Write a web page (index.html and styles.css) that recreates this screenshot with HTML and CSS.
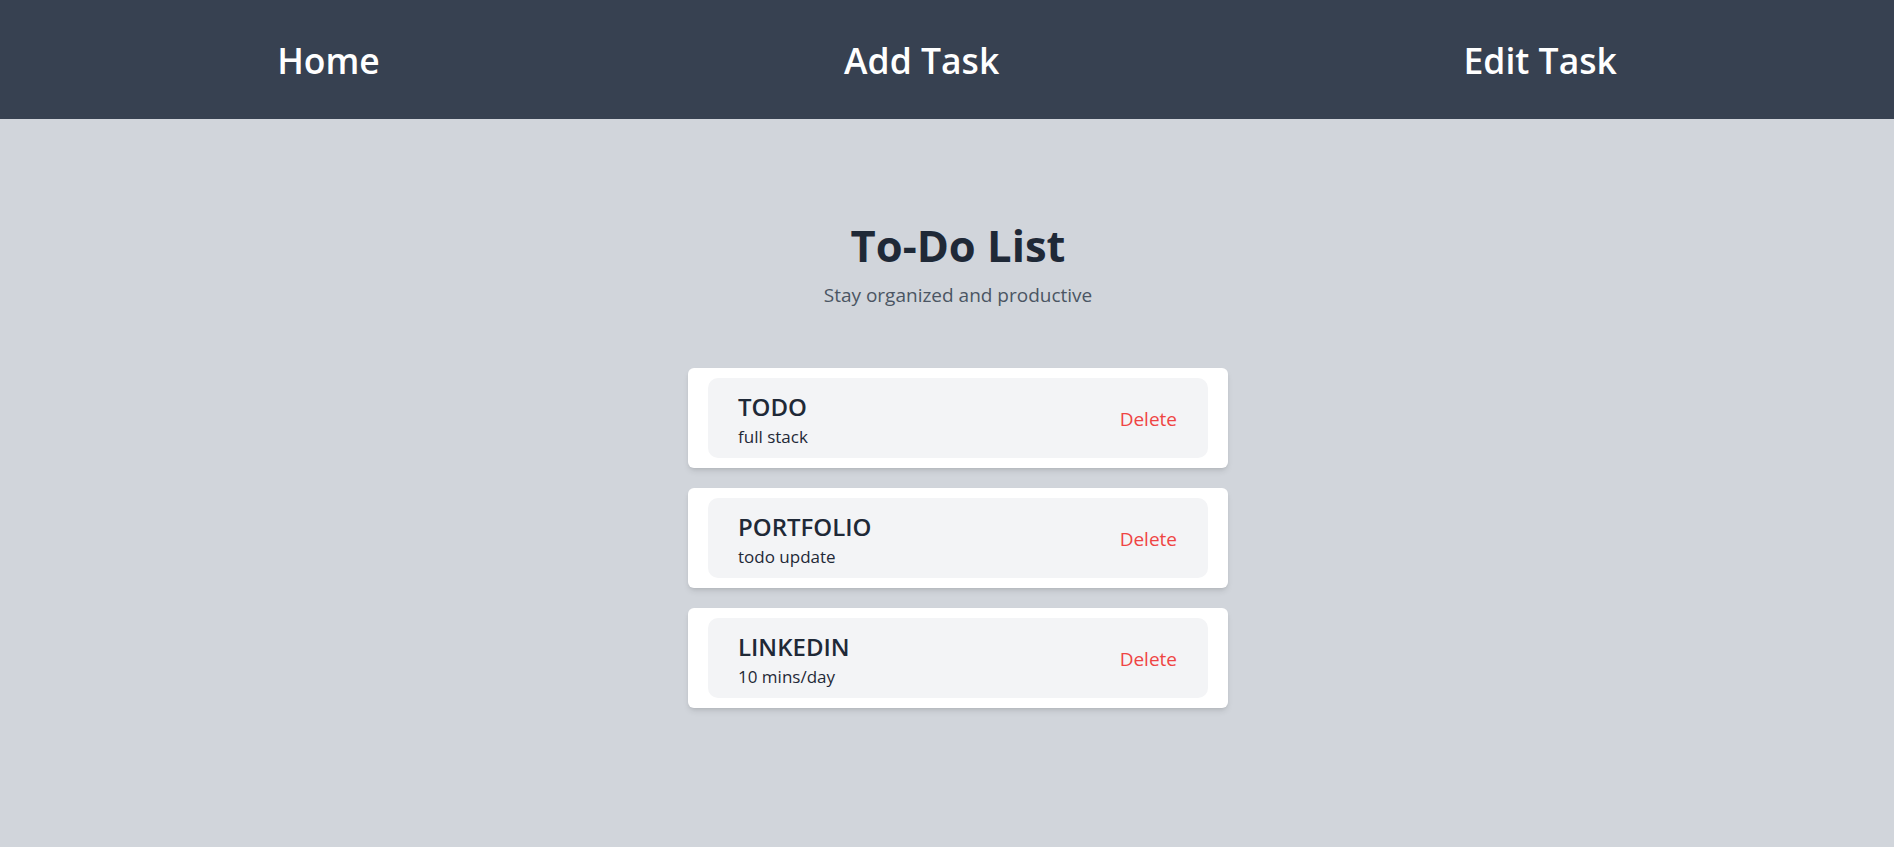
FILE: index.html
```html
<!DOCTYPE html>
<html lang="en">
<head>
<meta charset="utf-8">
<title>To-Do List</title>
<link rel="stylesheet" href="styles.css">
</head>
<body>
<nav class="nav">
  <a class="nav-link" href="#">Home</a>
  <a class="nav-link" href="#">Add Task</a>
  <a class="nav-link" href="#">Edit Task</a>
</nav>
<main class="main">
  <h1 class="title">To-Do List</h1>
  <p class="subtitle">Stay organized and productive</p>
  <ul class="tasks">
    <li class="task">
      <div class="task-inner">
        <div class="task-text">
          <h2 class="task-title">TODO</h2>
          <p class="task-desc">full stack</p>
        </div>
        <button class="delete">Delete</button>
      </div>
    </li>
    <li class="task">
      <div class="task-inner">
        <div class="task-text">
          <h2 class="task-title">PORTFOLIO</h2>
          <p class="task-desc">todo update</p>
        </div>
        <button class="delete">Delete</button>
      </div>
    </li>
    <li class="task">
      <div class="task-inner">
        <div class="task-text">
          <h2 class="task-title">LINKEDIN</h2>
          <p class="task-desc">10 mins/day</p>
        </div>
        <button class="delete">Delete</button>
      </div>
    </li>
  </ul>
</main>
</body>
</html>
```
FILE: styles.css
```css
* { box-sizing: border-box; }
html, body { margin: 0; padding: 0; }
body {
  background: #d1d5db;
  font-family: "Open Sans", "Noto Sans", sans-serif;
  color: #1f2937;
  min-height: 847px;
}
.nav {
  height: 119px;
  background: #374151;
  display: flex;
  justify-content: space-around;
  align-items: center;
  padding: 2px 45px 0;
}
.nav-link {
  color: #ffffff;
  text-decoration: none;
  font-size: 35.5px;
  font-weight: 600;
  line-height: 45px;
}
.main {
  display: flex;
  flex-direction: column;
  align-items: center;
  padding: 102px 0 0 22px;
}
.title {
  margin: 0;
  font-size: 43.5px;
  line-height: 50px;
  font-weight: 700;
  color: #1f2937;
}
.subtitle {
  margin: 10px 0 0;
  font-size: 19px;
  line-height: 28px;
  color: #4b5563;
}
.tasks {
  list-style: none;
  margin: 59px 0 0;
  padding: 0;
  display: flex;
  flex-direction: column;
  gap: 20px;
  width: 540px;
}
.task {
  background: #ffffff;
  border-radius: 6px;
  padding: 10px 20px;
  box-shadow: 0 4px 6px -1px rgba(0,0,0,0.1), 0 2px 4px -2px rgba(0,0,0,0.1);
}
.task-inner {
  height: 80px;
  background: #f3f4f6;
  border-radius: 10px;
  padding: 2px 31px 0 30px;
  display: flex;
  justify-content: space-between;
  align-items: center;
}
.task-title {
  margin: 0;
  font-size: 24px;
  line-height: 35px;
  font-weight: 600;
  color: #1f2937;
}
.task-desc {
  margin: 0;
  font-size: 17px;
  line-height: 25px;
  color: #1f2937;
}
.delete {
  background: none;
  border: 0;
  padding: 0;
  font-family: inherit;
  font-size: 19px;
  color: #ef4444;
  cursor: pointer;
}
```
